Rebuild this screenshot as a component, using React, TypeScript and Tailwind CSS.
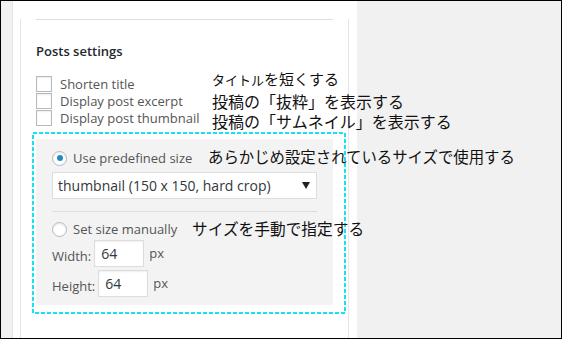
const jp = "font-['Noto_Sans_CJK_JP','Noto_Sans',sans-serif] text-[#111] whitespace-nowrap";

function Checkbox({ label }: { label: string }) {
  return (
    <div className="flex h-[17px] items-start">
      <div className="h-4 w-4 shrink-0 border border-[#b4b9be] bg-white shadow-[inset_0_1px_2px_rgba(0,0,0,0.07)]" />
      <span className="ml-[8px] mt-[-1px] text-[13px] leading-[18px] text-[#555]">{label}</span>
    </div>
  );
}

function Radio({ checked, label }: { checked?: boolean; label: string }) {
  return (
    <div className="flex h-4 items-center">
      <div className="flex h-[15px] w-[15px] shrink-0 items-center justify-center rounded-full border border-[#b4b9be] bg-white shadow-[inset_0_1px_2px_rgba(0,0,0,0.1)]">
        {checked && <div className="h-[6px] w-[6px] rounded-full bg-[#1e8cbe]" />}
      </div>
      <span className="ml-[6px] text-[13px] leading-[18px] text-[#555]">{label}</span>
    </div>
  );
}

function SizeInput({ label }: { label: string }) {
  return (
    <div className="flex h-[27px] items-center">
      <span className="mt-[5px] text-[13px] leading-[18px] text-[#555]">{label}</span>
      <div className="ml-[3px] flex h-[27px] w-[50px] items-center border border-[#ddd] bg-white pl-[6px] text-[14px] text-[#32373c] shadow-[inset_0_1px_2px_rgba(0,0,0,0.07)]">
        64
      </div>
      <span className="ml-[5px] text-[13px] text-[#555]">px</span>
    </div>
  );
}

export default function App() {
  return (
    <div className="relative flex h-[339px] w-[562px] overflow-hidden border border-black bg-[#f1f1f1] font-['Open_Sans','Liberation_Sans',sans-serif]">
      {/* left gutter */}
      <div className="w-[11px] shrink-0" />

      {/* sidebar column */}
      <div className="w-[345px] shrink-0 border-l border-[#e5e5e5] bg-white pl-[7px]">
        <div className="h-full w-[329px] border-x border-[#e5e5e5] px-[15px]">
          <div className="mt-[18px] border-t border-[#ddd]" />

          <div className="mt-[22px] text-[13px] font-semibold leading-[18px] text-[#23282d]">Posts settings</div>

          <div className="mt-[16px]">
            <Checkbox label="Shorten title" />
            <Checkbox label="Display post excerpt" />
            <Checkbox label="Display post thumbnail" />
          </div>

          {/* thumbnail size box */}
          <div className="mt-[12px] h-[166px] bg-[#f3f3f3] px-[16px] pt-[11px]">
            <Radio checked label="Use predefined size" />

            <div className="mt-[6px] flex h-[27px] items-center justify-between border border-[#ddd] bg-white pl-[5px] pr-[6px] text-[14px] text-[#32373c]">
              <span>thumbnail (150 x 150, hard crop)</span>
              <svg width="8" height="7" viewBox="0 0 8 7">
                <path d="M0 0 H8 L4 7 Z" fill="#222" />
              </svg>
            </div>

            <div className="mt-[12px] border-t border-[#ddd]" />

            <div className="mt-[9px]">
              <Radio label="Set size manually" />
            </div>

            <div className="mt-[3px]">
              <SizeInput label="Width:" />
            </div>
            <div className="mt-[3px]">
              <SizeInput label="Height:" />
            </div>
          </div>
        </div>
      </div>

      {/* dashed annotation frame */}
      <svg className="absolute left-[31px] top-[131px]" width="314" height="182" viewBox="0 0 314 182">
        <rect x="1" y="1" width="312" height="180" fill="none" stroke="#12e4f4" strokeWidth="2" strokeDasharray="4 2" />
      </svg>

      {/* annotations */}
      <div className={`absolute left-[211px] top-[70px] text-[15px] leading-[16px] ${jp}`}>
        <span className="text-[13px]">タイトル</span>を短くする
      </div>
      <div className={`absolute left-[211px] top-[92px] text-[16px] leading-[16px] ${jp}`}>投稿の「抜粋」を表示する</div>
      <div className={`absolute left-[211px] top-[112px] text-[16px] leading-[16px] ${jp}`}>投稿の「サムネイル」を表示する</div>
      <div className={`absolute left-[207px] top-[147px] text-[15.4px] leading-[16px] ${jp}`}>あらかじめ設定されているサイズで使用する</div>
      <div className={`absolute left-[191px] top-[220px] text-[15.7px] leading-[16px] ${jp}`}>サイズを手動で指定する</div>
    </div>
  );
}
